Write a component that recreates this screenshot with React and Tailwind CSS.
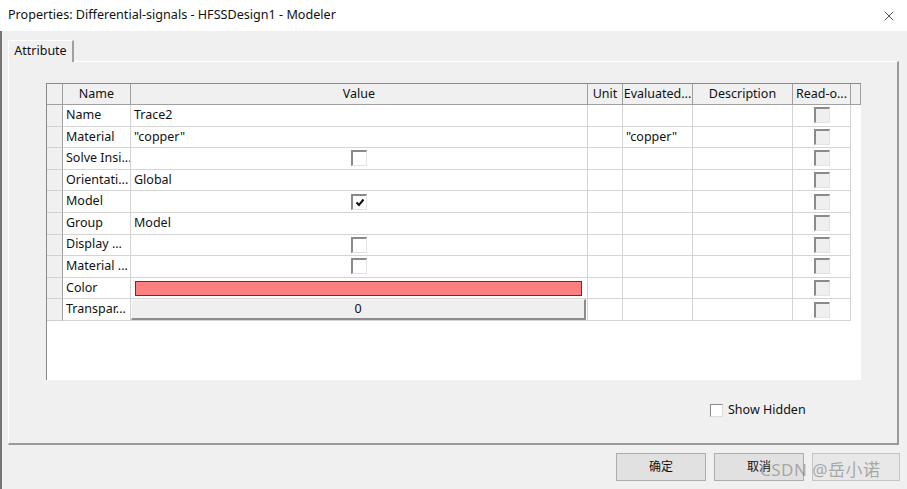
import { X } from 'lucide-react'

const cols = [16, 68, 457, 35, 70, 100, 58]

const rows = [
  { name: 'Name', value: 'Trace2' },
  { name: 'Material', value: '"copper"', evaluated: '"copper"' },
  { name: 'Solve Insi...', check: false },
  { name: 'Orientati...', value: 'Global' },
  { name: 'Model', check: true },
  { name: 'Group', value: 'Model' },
  { name: 'Display ...', check: false },
  { name: 'Material ...', check: false },
  { name: 'Color', color: true },
  { name: 'Transpar...', button: '0' },
]

function Check({ checked, gray }) {
  return (
    <div
      className={`w-4 h-4 border-t-2 border-l-2 border-[#8a8a8a] border-r border-b border-r-[#e3e3e3] border-b-[#e3e3e3] flex items-center justify-center ${gray ? 'bg-[#efefef]' : 'bg-white'}`}
    >
      {checked && (
        <svg width="10" height="9" viewBox="0 0 10 9">
          <path d="M1.5 4.5 L4 7 L8.5 1.5" fill="none" stroke="#111" strokeWidth="2" />
        </svg>
      )}
    </div>
  )
}

function HeaderRow() {
  const labels = ['', 'Name', 'Value', 'Unit', 'Evaluated...', 'Description', 'Read-o...']
  return (
    <div className="flex h-[21px] bg-[#f0f0f0] border-b border-[#a0a0a0]">
      {labels.map((l, i) => (
        <div
          key={i}
          style={{ width: cols[i] }}
          className="h-full border-r border-[#a0a0a0] flex items-center justify-center whitespace-nowrap overflow-hidden"
        >
          {l}
        </div>
      ))}
      <div className="w-[10px] h-full border-r border-[#a0a0a0]" />
    </div>
  )
}

function Row({ r }) {
  return (
    <div className="flex h-[21.6px]">
      <div style={{ width: cols[0] }} className="h-full bg-[#f0f0f0] border-r border-[#a0a0a0] border-b border-b-[#d0d0d0]" />
      <div style={{ width: cols[1] }} className="h-full border-r border-b border-[#d4d4d4] pl-[3px] flex items-center whitespace-nowrap overflow-hidden">
        {r.name}
      </div>
      <div style={{ width: cols[2] }} className="h-full border-r border-b border-[#d4d4d4] flex items-center whitespace-nowrap">
        {r.value && <span className="pl-[3px]">{r.value}</span>}
        {r.check !== undefined && (
          <div className="w-full flex justify-center">
            <Check checked={r.check} />
          </div>
        )}
        {r.color && (
          <div className="ml-[4px] w-[447px] h-[15px] bg-[#ff8080] border border-[#404040]" />
        )}
        {r.button && (
          <div className="w-[455px] h-[21px] bg-[#efefef] border-t border-l border-[#f8f8f8] border-r-2 border-b-2 border-r-[#8c8c8c] border-b-[#8c8c8c] flex items-center justify-center">
            {r.button}
          </div>
        )}
      </div>
      <div style={{ width: cols[3] }} className="h-full border-r border-b border-[#d4d4d4]" />
      <div style={{ width: cols[4] }} className="h-full border-r border-b border-[#d4d4d4] pl-[3px] flex items-center whitespace-nowrap">
        {r.evaluated}
      </div>
      <div style={{ width: cols[5] }} className="h-full border-r border-b border-[#d4d4d4]" />
      <div style={{ width: cols[6] }} className="h-full border-r border-b border-[#d4d4d4] flex items-center justify-center">
        <Check gray />
      </div>
    </div>
  )
}

export default function App() {
  return (
    <div className="w-[907px] h-[489px] bg-[#f0f0f0] relative overflow-hidden text-[#111] font-['Noto_Sans','Noto_Sans_CJK_SC',sans-serif]">
      {/* title bar */}
      <div className="h-[31px] bg-white flex items-center justify-between pl-[8px] pr-[10px] text-[12.6px]">
        <span>Properties: Differential-signals - HFSSDesign1 - Modeler</span>
        <X size={16} strokeWidth={1.2} className="text-[#222]" />
      </div>

      <div className="h-[458px] border-l-2 border-[#747474] flex flex-col text-[12.5px]">
        {/* tab */}
        <div className="pl-[6px] pt-[9px] flex">
          <div className="w-[66px] h-[22px] bg-[#f0f0f0] border-t border-l border-white border-r-2 border-r-[#a0a0a0] flex items-center justify-center -mb-px relative z-10">
            Attribute
          </div>
        </div>

        {/* panel */}
        <div className="ml-[6px] w-[891px] h-[384px] shrink-0 border-t border-l border-white border-r-2 border-b-2 border-r-[#9a9a9a] border-b-[#9a9a9a] relative">
          <div className="ml-[37px] mt-[21px] w-[815px] h-[297px] bg-white border-t border-l border-[#8a8a8a] overflow-hidden">
            <HeaderRow />
            {rows.map((r, i) => (
              <Row key={i} r={r} />
            ))}
          </div>

          <div className="flex items-center gap-[5px] ml-[701px] mt-[21px]">
            <div className="w-[13px] h-[13px] bg-white border-t border-l border-[#8a8a8a] border-r border-b border-r-[#dcdcdc] border-b-[#dcdcdc]" />
            <span>Show Hidden</span>
          </div>
        </div>

        {/* buttons */}
        <div className="flex gap-[8px] ml-[614px] mt-[8px] text-[12px]">
          <div className="w-[90px] h-[28px] bg-[#e1e1e1] border border-[#adadad] flex items-center justify-center">确定</div>
          <div className="w-[90px] h-[28px] bg-[#e1e1e1] border border-[#adadad] flex items-center justify-center">取消</div>
          <div className="w-[88px] h-[28px] bg-[#e8e8e8] border border-[#c4c4c4]" />
        </div>
      </div>

      {/* watermark */}
      <div className="absolute left-[760px] top-[457px] text-[17px] text-[#8a8a8a]/70 tracking-[0.5px] pointer-events-none">
        CSDN @岳小诺
      </div>
    </div>
  )
}
